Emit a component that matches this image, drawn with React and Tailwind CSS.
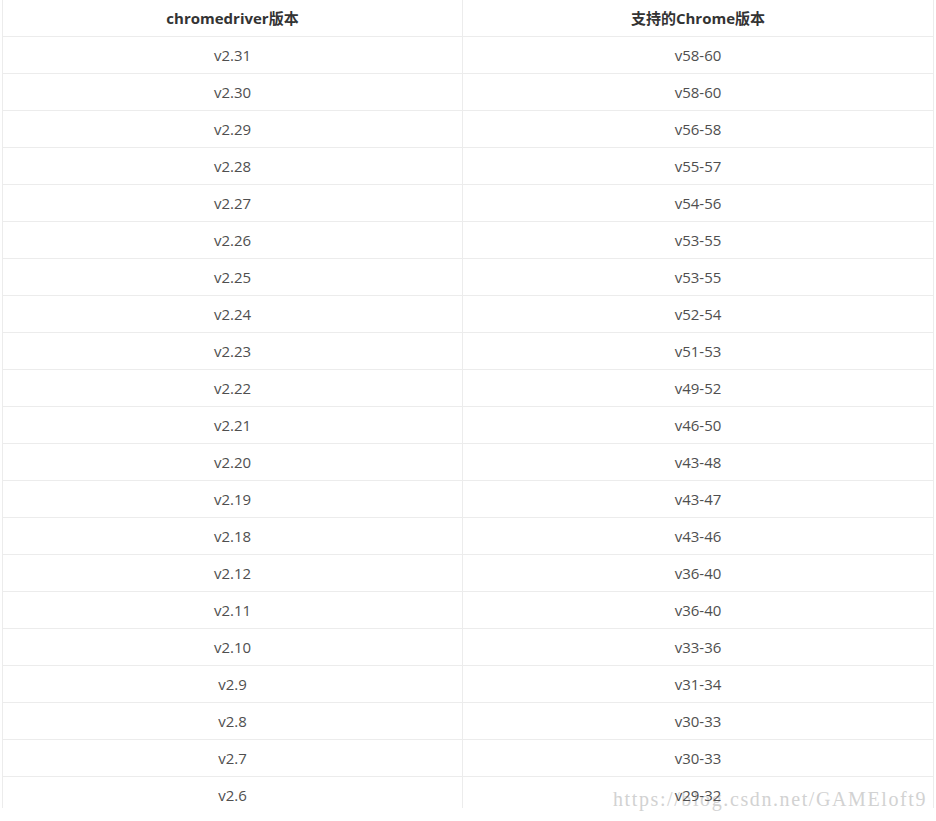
const rows = [
  ["v2.31", "v58-60"],
  ["v2.30", "v58-60"],
  ["v2.29", "v56-58"],
  ["v2.28", "v55-57"],
  ["v2.27", "v54-56"],
  ["v2.26", "v53-55"],
  ["v2.25", "v53-55"],
  ["v2.24", "v52-54"],
  ["v2.23", "v51-53"],
  ["v2.22", "v49-52"],
  ["v2.21", "v46-50"],
  ["v2.20", "v43-48"],
  ["v2.19", "v43-47"],
  ["v2.18", "v43-46"],
  ["v2.12", "v36-40"],
  ["v2.11", "v36-40"],
  ["v2.10", "v33-36"],
  ["v2.9", "v31-34"],
  ["v2.8", "v30-33"],
  ["v2.7", "v30-33"],
  ["v2.6", "v29-32"],
]

export default function App() {
  return (
    <div className="relative w-[936px] h-[821px] bg-white overflow-hidden font-['Open_Sans','Noto_Sans_CJK_SC',sans-serif] text-[15px]">
      {/* watermark sits under the table text */}
      <div className="absolute left-[613px] top-[789px] text-[20px] leading-none text-[#d2d2d2] font-['Liberation_Serif',serif] tracking-[1.6px] whitespace-nowrap">
        https://blog.csdn.net/GAMEloft9
      </div>
      <div className="relative ml-[2px] w-[932px] h-[808px] overflow-hidden border-l border-r border-[#ececec]">
        {/* Header */}
        <div className="flex h-[37px] border-b border-[#ececec] font-bold text-[#333]">
          <div className="w-[460px] flex items-center justify-center border-r border-[#ececec]">
            chromedriver版本
          </div>
          <div className="flex-1 flex items-center justify-center">支持的Chrome版本</div>
        </div>
        {rows.map(([driver, chrome]) => (
          <div key={driver} className="flex h-[37px] border-b border-[#ececec] text-[#4f4f4f]">
            <div className="w-[460px] flex items-center justify-center border-r border-[#ececec]">
              {driver}
            </div>
            <div className="flex-1 flex items-center justify-center">{chrome}</div>
          </div>
        ))}
      </div>
    </div>
  )
}
